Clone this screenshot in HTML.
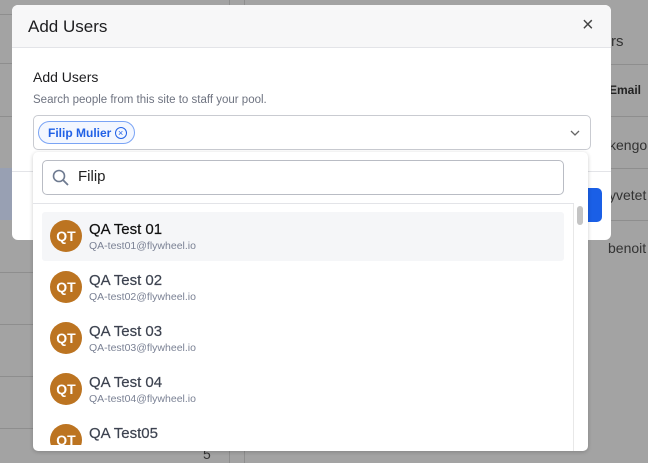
<!DOCTYPE html>
<html><head><style>
*{box-sizing:border-box;margin:0;padding:0}
body{width:648px;height:463px;overflow:hidden;background:#a3a3a3;font-family:"Liberation Sans",sans-serif;position:relative}
.hl{position:absolute;height:1px;background:#8e8e8e}
.abs{position:absolute}
.bgt{position:absolute;color:#333;font-size:14px}
.item{position:absolute;left:42px;width:522px;height:49px}
.av{position:absolute;left:8px;top:8px;width:32px;height:32px;border-radius:50%;background:#bc7421;color:#fff;font-weight:bold;font-size:14px;text-align:center;line-height:32px}
.nm{position:absolute;left:47px;top:9px;font-size:15px;color:#3d4350;-webkit-text-stroke:0.2px #3d4350}
.em{position:absolute;left:47px;top:28px;font-size:10.5px;color:#7a8194}
</style></head><body>
<div class="abs" style="left:0;top:168px;width:230px;height:52px;background:#98a0b3"></div>
<div class="hl" style="left:0;top:14px;width:230px"></div>
<div class="hl" style="left:0;top:63px;width:230px"></div>
<div class="hl" style="left:0;top:116px;width:230px"></div>
<div class="hl" style="left:0;top:272px;width:230px"></div>
<div class="hl" style="left:0;top:324px;width:230px"></div>
<div class="hl" style="left:0;top:376px;width:230px"></div>
<div class="hl" style="left:0;top:428px;width:230px"></div>
<div class="hl" style="left:600px;top:64px;width:48px"></div>
<div class="hl" style="left:600px;top:116px;width:48px"></div>
<div class="hl" style="left:600px;top:168px;width:48px"></div>
<div class="hl" style="left:600px;top:220px;width:48px"></div>
<div class="abs" style="left:229px;top:0;width:1px;height:463px;background:#8e8e8e"></div>
<div class="abs" style="left:244px;top:0;width:1px;height:463px;background:#8e8e8e"></div>
<div class="bgt" style="left:611px;top:33px;font-size:15px">rs</div>
<div class="bgt" style="left:609px;top:83px;font-size:12px;font-weight:bold;color:#222">Email</div>
<div class="bgt" style="left:609px;top:137px">kengo</div>
<div class="bgt" style="left:609px;top:187px">yvetet</div>
<div class="bgt" style="left:608px;top:240px">benoit</div>
<div class="bgt" style="left:203px;top:446px">5</div>

<div class="abs" style="left:12px;top:5px;width:599px;height:235px;background:#fff;border-radius:6px;overflow:hidden">
  <div class="abs" style="left:0;top:0;width:599px;height:43px;background:#f7f7f8;border-bottom:1px solid #e3e4e8"></div>
  <div class="abs" style="left:16px;top:12px;font-size:17px;color:#1d1d1f">Add Users</div>
  <div class="abs" style="left:570px;top:9px;font-size:20px;color:#444">×</div>
  <div class="abs" style="left:21px;top:64px;font-size:14px;color:#1d1d1f">Add Users</div>
  <div class="abs" style="left:21px;top:89px;font-size:11.5px;color:#6e7380">Search people from this site to staff your pool.</div>
  <div class="abs" style="left:21px;top:110px;width:558px;height:35px;border:1px solid #c9cbd1;border-radius:5px"></div>
  <div class="abs" style="left:26px;top:116px;width:97px;height:23px;border:1px solid #7aa4f5;border-radius:12px;background:#f3f7ff;color:#2161e6;font-size:12px;font-weight:bold;padding:4px 0 0 9px">Filip Mulier <span style="display:inline-block;width:12px;height:12px;border:1px solid #2161e6;border-radius:50%;font-size:9px;line-height:10px;text-align:center;font-weight:normal;vertical-align:1px">×</span></div>
  <svg class="abs" style="left:558px;top:124px" width="10" height="8"><path d="M1 2l4 4 4-4" fill="none" stroke="#666" stroke-width="1.3"/></svg>
  <div class="abs" style="left:0;top:166px;width:599px;height:1px;background:#e3e4e8"></div>
  <div class="abs" style="left:570px;top:183px;width:20px;height:34px;background:#1a5fe6;border-radius:5px"></div>
</div>

<div class="abs" style="left:33px;top:152px;width:555px;height:299px;background:#fff;border-radius:5px;box-shadow:0 1px 4px rgba(0,0,0,.2);overflow:hidden">
  <div class="abs" style="left:9px;top:8px;width:522px;height:35px;border:1px solid #b9bcc4;border-radius:5px"></div>
  <svg class="abs" style="left:19px;top:17px" width="18" height="18"><circle cx="7" cy="7" r="5.5" fill="none" stroke="#6e7a90" stroke-width="1.6"/><path d="M11 11l5 5" stroke="#6e7a90" stroke-width="1.8"/></svg>
  <div class="abs" style="left:45px;top:16px;font-size:15px;color:#222">Filip</div>
  <div class="abs" style="left:0;top:51px;width:541px;height:1px;background:#e3e4e8"></div>
  <div class="abs" style="left:540px;top:52px;width:1px;height:247px;background:#e8e8e8"></div>
  <div class="abs" style="left:544px;top:54px;width:6px;height:19px;background:#c4c4c4;border-radius:3px"></div>
</div>
<div class="item" style="top:212px;background:#f5f6f8;border-radius:3px"><div class="av">QT</div><div class="nm" style="color:#111;-webkit-text-stroke:0.2px #111">QA Test 01</div><div class="em">QA-test01@flywheel.io</div></div>
<div class="item" style="top:263px"><div class="av">QT</div><div class="nm">QA Test 02</div><div class="em">QA-test02@flywheel.io</div></div>
<div class="item" style="top:314px"><div class="av">QT</div><div class="nm">QA Test 03</div><div class="em">QA-test03@flywheel.io</div></div>
<div class="item" style="top:365px"><div class="av">QT</div><div class="nm">QA Test 04</div><div class="em">QA-test04@flywheel.io</div></div>
<div class="abs" style="left:42px;top:416px;width:522px;height:29px;overflow:hidden"><div class="item" style="left:0;top:0"><div class="av">QT</div><div class="nm">QA Test05</div><div class="em">QA-test05@flywheel.io</div></div></div>
</body></html>
